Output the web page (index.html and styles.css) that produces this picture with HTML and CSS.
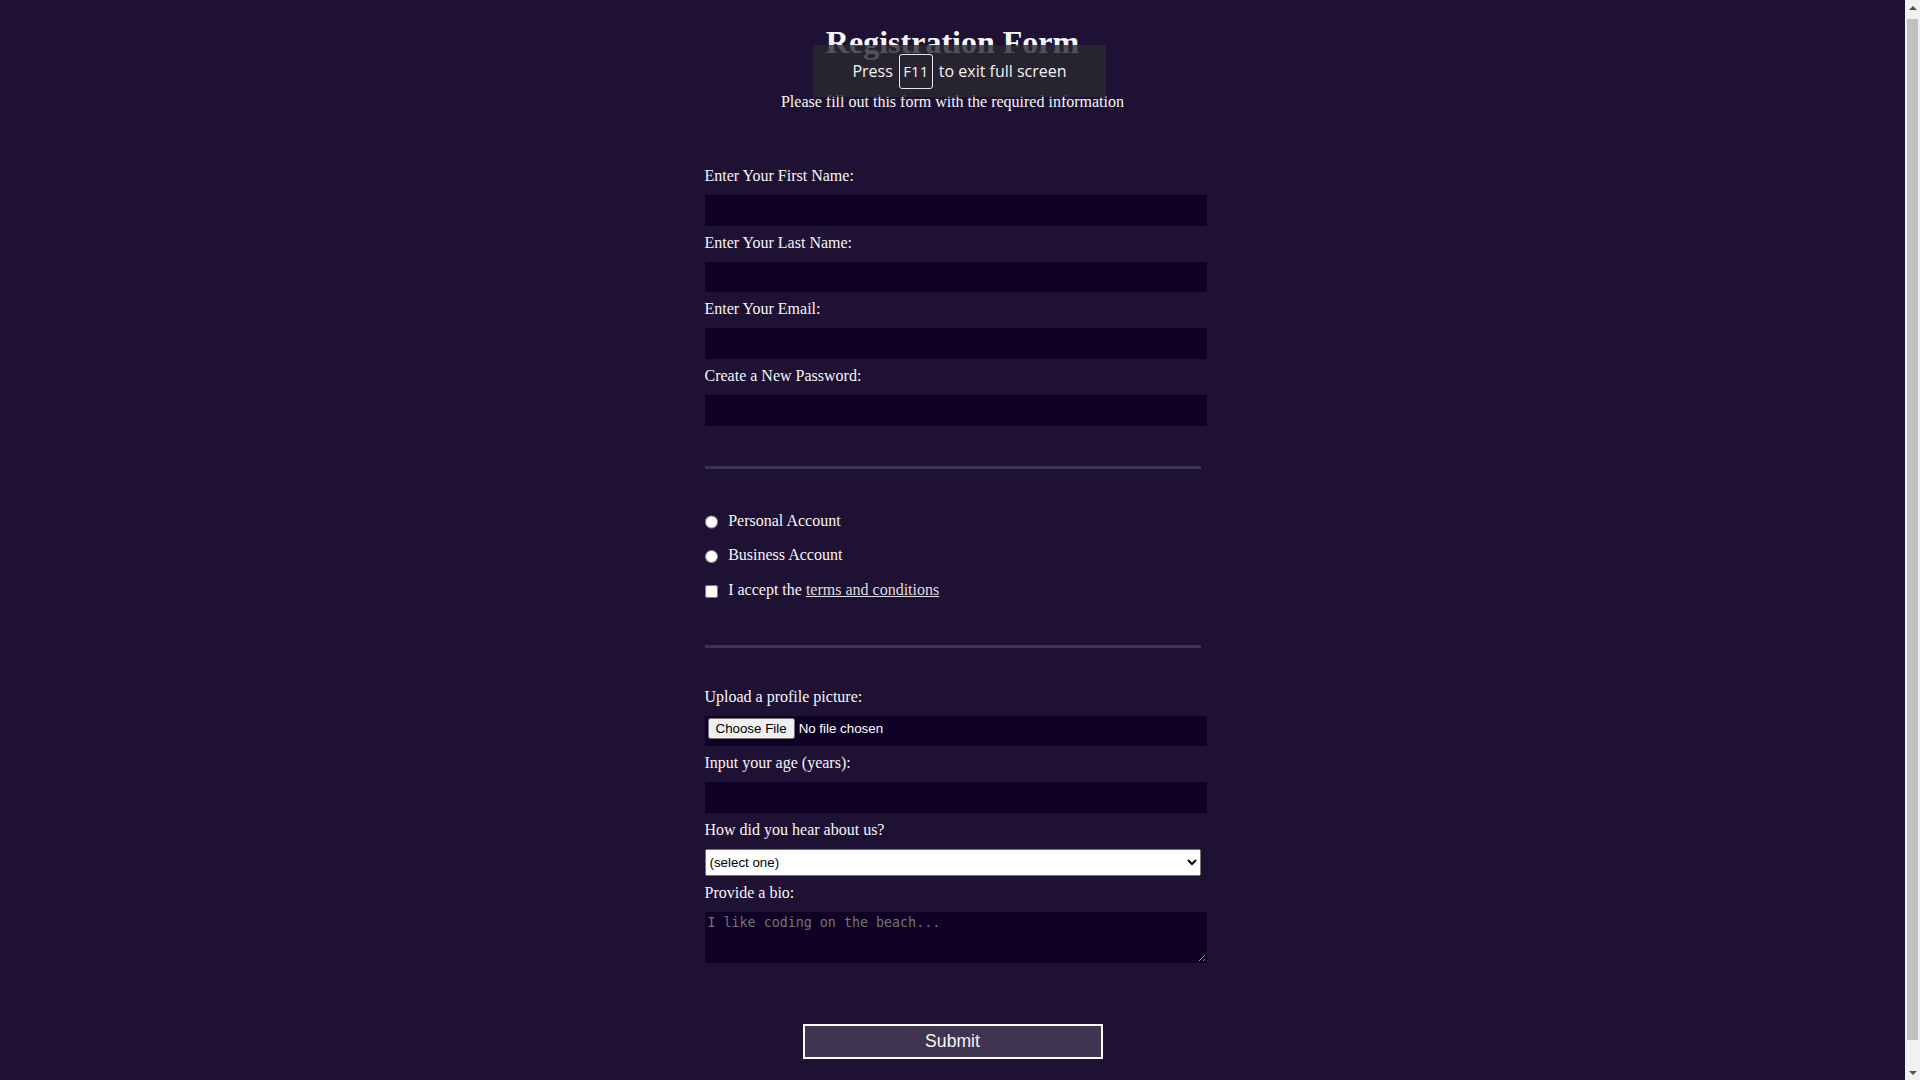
FILE: index.html
```html
<!DOCTYPE html>
<html lang="en">
<head>
  <meta charset="UTF-8">
  <title>Registration Form</title>
  <link rel="stylesheet" href="styles.css">
</head>
<body class="page">
  <h1 class="title">Registration Form</h1>
  <p class="intro">Please fill out this form with the required information</p>
  <form class="reg-form" method="post" action="#">
    <fieldset class="group">
      <label class="field" for="first-name">Enter Your First Name: <input class="control" id="first-name" name="first-name" type="text"></label>
      <label class="field" for="last-name">Enter Your Last Name: <input class="control" id="last-name" name="last-name" type="text"></label>
      <label class="field" for="email">Enter Your Email: <input class="control" id="email" name="email" type="email"></label>
      <label class="field" for="new-password">Create a New Password: <input class="control" id="new-password" name="new-password" type="password"></label>
    </fieldset>
    <fieldset class="group">
      <label class="field" for="personal-account"><input class="inline" id="personal-account" type="radio" name="account-type"> Personal Account</label>
      <label class="field" for="business-account"><input class="inline" id="business-account" type="radio" name="account-type"> Business Account</label>
      <label class="field" for="terms-and-conditions"><input class="inline" id="terms-and-conditions" type="checkbox" name="terms"> I accept the <a class="link" href="#">terms and conditions</a></label>
    </fieldset>
    <fieldset class="group group-last">
      <label class="field" for="profile-picture">Upload a profile picture: <input class="control file" id="profile-picture" type="file" name="file"></label>
      <label class="field" for="age">Input your age (years): <input class="control" id="age" type="number" name="age" min="13" max="120"></label>
      <label class="field" for="referrer">How did you hear about us?
        <select class="select" id="referrer" name="referrer">
          <option value="">(select one)</option>
          <option value="1">freeCodeCamp News</option>
          <option value="2">freeCodeCamp YouTube Channel</option>
          <option value="3">freeCodeCamp Forum</option>
          <option value="4">Other</option>
        </select>
      </label>
      <label class="field" for="bio">Provide a bio:
        <textarea class="control area" id="bio" name="bio" rows="3" cols="30" placeholder="I like coding on the beach..."></textarea>
      </label>
    </fieldset>
    <input class="submit" type="submit" value="Submit">
  </form>
  <div class="fs-bubble">Press <span class="key">F11</span> to exit full screen</div>
  <div class="scrollbar" aria-hidden="true">
    <div class="sb-btn"><span class="sb-arrow sb-up"></span></div>
    <div class="sb-track"><div class="sb-thumb"></div></div>
    <div class="sb-btn"><span class="sb-arrow sb-down"></span></div>
  </div>
</body>
</html>
```
FILE: styles.css
```css
html {
  background-color: #1f1133;
}
.page {
  width: calc(100% - 15px);
  height: 100vh;
  margin: 0;
  background-color: #1f1133;
  color: #f5f6f7;
  font-family: "Liberation Serif", "Times New Roman", serif;
  font-size: 16px;
}
.title, .intro {
  margin: 1em auto;
  text-align: center;
}
.title {
  margin-top: 24px;
}
.reg-form {
  width: 60vw;
  max-width: 500px;
  min-width: 300px;
  margin: 0 auto;
  padding-bottom: 2em;
}
.group {
  border: none;
  padding: 2rem 0;
  border-bottom: 3px solid #3d3352;
}
.group-last {
  border-bottom: none;
}
.field {
  display: block;
  margin: 0.5rem 0;
}
.control, .select, .inline {
  margin: 10px 0 0 0;
  width: 100%;
  min-height: 2em;
}
.control {
  background-color: #0f0026;
  border: 1px solid #0f0026;
  color: #ffffff;
}
.area {
  font-family: "DejaVu Sans Mono", "Liberation Mono", monospace;
  font-size: 13.33px;
}
.area::placeholder {
  color: #757575;
}
.file {
  padding: 1px 2px;
}
.inline {
  width: unset;
  margin: 0 0.5em 0 0;
  vertical-align: middle;
}
.link {
  color: #dfdfe2;
}
.submit {
  display: block;
  width: 60%;
  margin: 1em auto;
  height: 2em;
  font-size: 1.1rem;
  font-family: "Liberation Sans", Arial, sans-serif;
  background-color: #403550;
  color: #f5f6f7;
  border: 2px solid #ffffff;
  min-width: 300px;
}
.fs-bubble {
  position: absolute;
  left: 813px;
  top: 45px;
  width: 293px;
  height: 52px;
  box-sizing: border-box;
  display: flex;
  align-items: center;
  justify-content: center;
  gap: 6px;
  background: rgba(41, 41, 47, 0.8);
  color: #f2f2f4;
  font-family: "Open Sans", "Noto Sans", sans-serif;
  font-size: 16px;
}
.key {
  display: inline-flex;
  align-items: center;
  justify-content: center;
  width: 34px;
  height: 35px;
  box-sizing: border-box;
  border: 1px solid #e8e8ea;
  border-radius: 3px;
  font-size: 15px;
}
.scrollbar {
  position: fixed;
  top: 0;
  right: 0;
  width: 15px;
  height: 100vh;
  background: #f1f1f1;
  display: flex;
  flex-direction: column;
}
.sb-btn {
  height: 15px;
  display: flex;
  align-items: center;
  justify-content: center;
}
.sb-arrow {
  width: 0;
  height: 0;
  border-left: 4px solid transparent;
  border-right: 4px solid transparent;
}
.sb-up {
  border-bottom: 4px solid #505050;
}
.sb-down {
  border-top: 4px solid #505050;
}
.sb-track {
  flex: 1;
  padding: 4px 2px 0 2px;
}
.sb-thumb {
  height: 1021px;
  background: #c1c1c1;
}
```
